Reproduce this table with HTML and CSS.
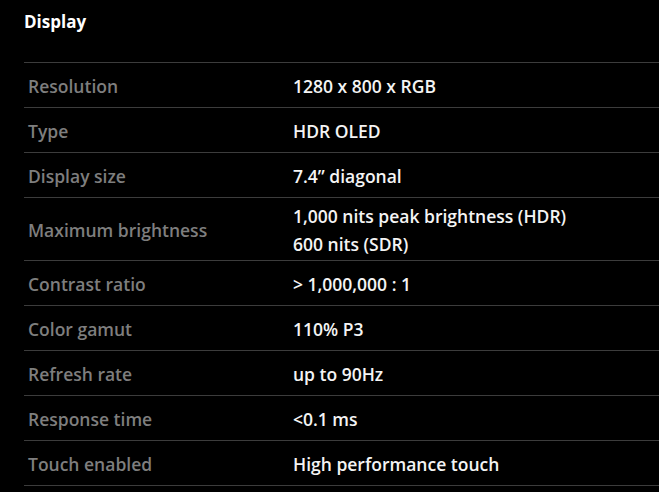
FILE: index.html
```html
<!DOCTYPE html>
<html>
<head>
<meta charset="utf-8">
<link rel="stylesheet" href="styles.css">
</head>
<body>
<section class="specs">
  <h2 class="specs-title">Display</h2>
  <div class="spec-table">
    <div class="spec-row"><div class="spec-label">Resolution</div><div class="spec-value">1280 x 800 x RGB</div></div>
    <div class="spec-row"><div class="spec-label">Type</div><div class="spec-value">HDR OLED</div></div>
    <div class="spec-row"><div class="spec-label">Display size</div><div class="spec-value">7.4” diagonal</div></div>
    <div class="spec-row"><div class="spec-label">Maximum brightness</div><div class="spec-value">1,000 nits peak brightness (HDR)<br>600 nits (SDR)</div></div>
    <div class="spec-row"><div class="spec-label">Contrast ratio</div><div class="spec-value">&gt; 1,000,000 : 1</div></div>
    <div class="spec-row"><div class="spec-label">Color gamut</div><div class="spec-value">110% P3</div></div>
    <div class="spec-row"><div class="spec-label">Refresh rate</div><div class="spec-value">up to 90Hz</div></div>
    <div class="spec-row"><div class="spec-label">Response time</div><div class="spec-value">&lt;0.1 ms</div></div>
    <div class="spec-row"><div class="spec-label">Touch enabled</div><div class="spec-value">High performance touch</div></div>
  </div>
</section>
</body>
</html>
```
FILE: styles.css
```css
html, body {
  margin: 0;
  padding: 0;
  background: #000;
}
body {
  font-family: "Open Sans", "Noto Sans", sans-serif;
  color: #f2f2f2;
}
.specs {
  padding: 10px 0 0 24px;
}
.specs-title {
  margin: 0;
  font-size: 17px;
  font-weight: 700;
  line-height: 24px;
  color: #fff;
}
.spec-table {
  margin-top: 28px;
  border-top: 1px solid #3c3c3c;
}
.spec-row {
  display: flex;
  align-items: center;
  min-height: 44px;
  border-bottom: 1px solid #3c3c3c;
}
.spec-label {
  width: 257px;
  padding: 4px 4px 2px;
  font-size: 17.5px;
  font-weight: 600;
  line-height: 28px;
  color: #7e7e7e;
}
.spec-value {
  flex: 1;
  padding: 4px 4px 2px;
  font-size: 17.5px;
  font-weight: 600;
  line-height: 28px;
  color: #f4f4f4;
}
```
